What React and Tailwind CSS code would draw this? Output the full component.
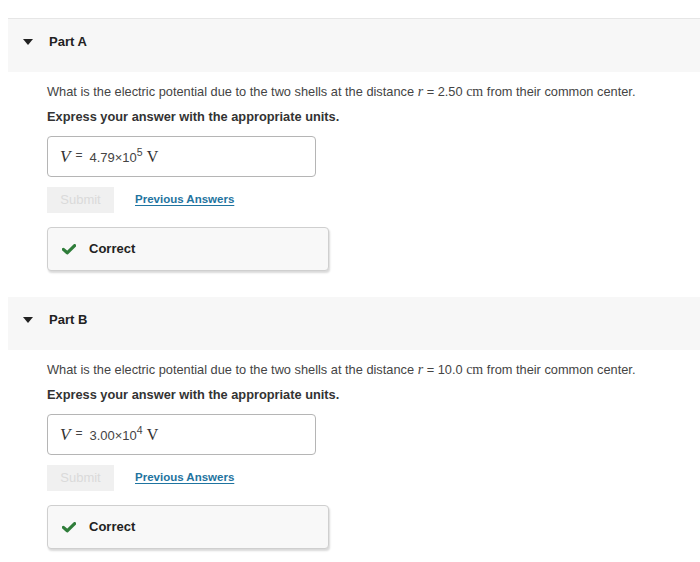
import React from 'react'

function Triangle() {
  return (
    <svg width="10" height="6" viewBox="0 0 10 6" className="block">
      <path d="M0 0 L10 0 L5 6 Z" fill="#222" />
    </svg>
  )
}

function Check() {
  return (
    <svg width="14" height="11" viewBox="0 0 14 11" className="block">
      <path d="M1.4 5.4 L5.2 8.8 L12.6 1.6" fill="none" stroke="#2f7d3a" strokeWidth="3.2" strokeLinecap="round" strokeLinejoin="round" />
    </svg>
  )
}

function Part({ label, first, r, mantissa, exp }) {
  return (
    <div className={first ? '' : 'mt-[26px]'}>
      <div className={`ml-[8px] h-[53px] box-content bg-[#f7f7f7] flex items-center pb-0 ${first ? 'border-t border-[#e6e6e6]' : ''}`}>
        <div className="ml-[15px] w-[26px] -mt-[7px]">
          <Triangle />
        </div>
        <span className="text-[13px] font-bold text-[#222] -mt-[7px]">{label}</span>
      </div>
      <div className="pl-[47px] pt-[12px]">
        <p className="text-[12.8px] leading-[16px] text-[#444]">
          What is the electric potential due to the two shells at the distance{' '}
          <span className="font-['Liberation_Serif',serif] italic text-[14px] leading-none">r</span> = {r}{' '}
          <span className="font-['Liberation_Serif',serif] text-[14px] leading-none">cm</span> from their common center.
        </p>
        <p className="mt-[9px] text-[12.8px] leading-[16px] font-bold text-[#333]">
          Express your answer with the appropriate units.
        </p>
        <div className="mt-[11px] w-[269px] h-[41px] border border-[#b5b5b5] rounded-[4px] flex items-center pl-[12px] pt-[1px]">
          <span className="font-['Liberation_Serif',serif] italic text-[17px] text-[#333]">V</span>
          <span className="ml-[5px] text-[12px] text-[#444] -translate-y-[2px]">=</span>
          <span className="ml-[7px] text-[13px] text-[#444] translate-y-[1px]">
            {mantissa}×10<sup className="text-[10.5px] -top-[6px]">{exp}</sup>
          </span>
          <span className="ml-[4px] font-['Liberation_Serif',serif] text-[16px] text-[#333]">V</span>
        </div>
        <div className="mt-[10px] flex items-center">
          <div className="w-[67px] h-[26px] bg-[#f0f0f0] flex items-center justify-center text-[13px] text-[#dadada]">
            Submit
          </div>
          <span className="ml-[21px] text-[11.5px] font-bold text-[#1f74a0] underline underline-offset-2">
            Previous Answers
          </span>
        </div>
        <div className="mt-[14px] w-[282px] h-[44px] bg-[#f8f8f8] border border-[#cfcfcf] rounded-[4px] shadow-[1px_2px_2px_rgba(0,0,0,0.15)] flex items-center pl-[14px]">
          <Check />
          <span className="ml-[13px] text-[13px] font-bold text-[#222]">Correct</span>
        </div>
      </div>
    </div>
  )
}

export default function App() {
  return (
    <div className="w-[700px] h-[562px] bg-white overflow-hidden pt-[18px] font-['Liberation_Sans',Arial,sans-serif]">
      <Part label="Part A" first r="2.50" mantissa="4.79" exp="5" />
      <Part label="Part B" r="10.0" mantissa="3.00" exp="4" />
    </div>
  )
}
